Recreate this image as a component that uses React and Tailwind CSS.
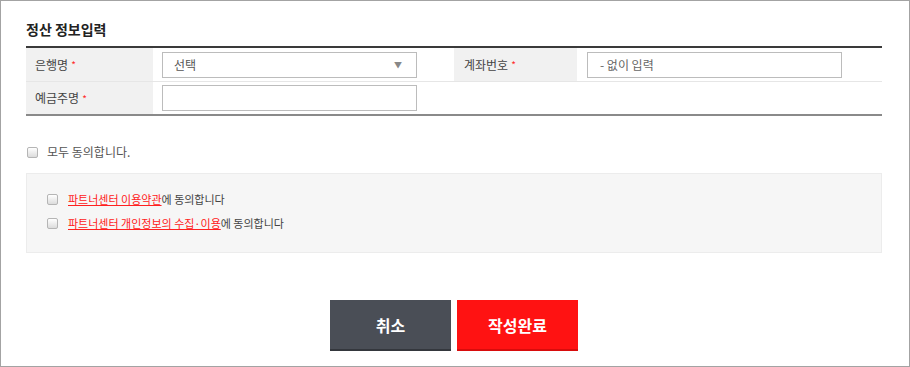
import React from 'react';

const Star = () => <span className="ml-[3px] text-[10px] text-[#ff2a2a] align-middle">*</span>;

const Check = () => (
    <span className="inline-block w-[11px] h-[11px] shrink-0 rounded-[2px] border border-[#b5b5b5] bg-gradient-to-b from-[#ffffff] to-[#dcdcdc]"></span>
);

const App = () => {
    return (
        <div className="w-[910px] h-[367px] box-border border border-[#a3a3a3] bg-white pl-[25px] pr-[27px] pt-[16px] text-[#333]" style={{ fontFamily: '"Noto Sans CJK KR", "Noto Sans", sans-serif' }}>
            <h2 className="h-[24px] leading-[24px] text-[14px] font-bold text-[#222] mb-[5px]">정산 정보입력</h2>

            <div className="border-t-2 border-b-2 border-t-[#3a3a3a] border-b-[#8a8a8a]">
                <div className="grid grid-cols-[127px_301px_123px_305px] h-[34px] border-b border-[#e6e6e6]">
                    <div className="bg-[#f1f1f1] flex items-center pl-[9px] text-[12px] text-[#444]">은행명<Star /></div>
                    <div className="flex items-center pl-[9px]">
                        <div className="w-[255px] h-[26px] border border-[#bcbcbc] flex items-center justify-between pl-[11px] pr-[14px] text-[12px] text-[#555]">
                            <span>선택</span>
                            <span className="text-[8px] text-[#888]">▼</span>
                        </div>
                    </div>
                    <div className="bg-[#f1f1f1] flex items-center pl-[10px] text-[12px] text-[#444]">계좌번호<Star /></div>
                    <div className="flex items-center pl-[10px]">
                        <div className="w-[255px] h-[26px] border border-[#bcbcbc] flex items-center pl-[12px] text-[12px] text-[#666]">- 없이 입력</div>
                    </div>
                </div>
                <div className="grid grid-cols-[127px_301px_123px_305px] h-[32px]">
                    <div className="bg-[#f1f1f1] flex items-center pl-[9px] text-[12px] text-[#444]">예금주명<Star /></div>
                    <div className="flex items-center pl-[9px]">
                        <div className="w-[255px] h-[26px] border border-[#bcbcbc]"></div>
                    </div>
                    <div></div>
                    <div></div>
                </div>
            </div>

            <div className="flex items-center gap-[9px] mt-[29px] h-[14px] pl-[1px]">
                <Check />
                <span className="text-[12px] text-[#555]">모두 동의합니다.</span>
            </div>

            <div className="mt-[14px] h-[80px] bg-[#f6f6f6] border border-[#ececec] pl-[20px] pt-[15px] flex flex-col gap-[4px]">
                <div className="flex items-center gap-[10px] h-[20px]">
                    <Check />
                    <span className="text-[11px] text-[#444]"><span className="text-[#ff2020] underline">파트너센터 이용약관</span>에 동의합니다</span>
                </div>
                <div className="flex items-center gap-[10px] h-[20px]">
                    <Check />
                    <span className="text-[11px] text-[#444]"><span className="text-[#ff2020] underline">파트너센터 개인정보의 수집·이용</span>에 동의합니다</span>
                </div>
            </div>

            <div className="flex justify-center gap-[6px] mt-[47px]">
                <button className="w-[121px] h-[51px] bg-[#4a4e56] border-b-2 border-[#34373d] text-white text-[16px] font-bold">취소</button>
                <button className="w-[121px] h-[51px] bg-[#ff1212] border-b-2 border-[#d80c0c] text-white text-[16px] font-bold">작성완료</button>
            </div>
        </div>
    );
};

export default App;
